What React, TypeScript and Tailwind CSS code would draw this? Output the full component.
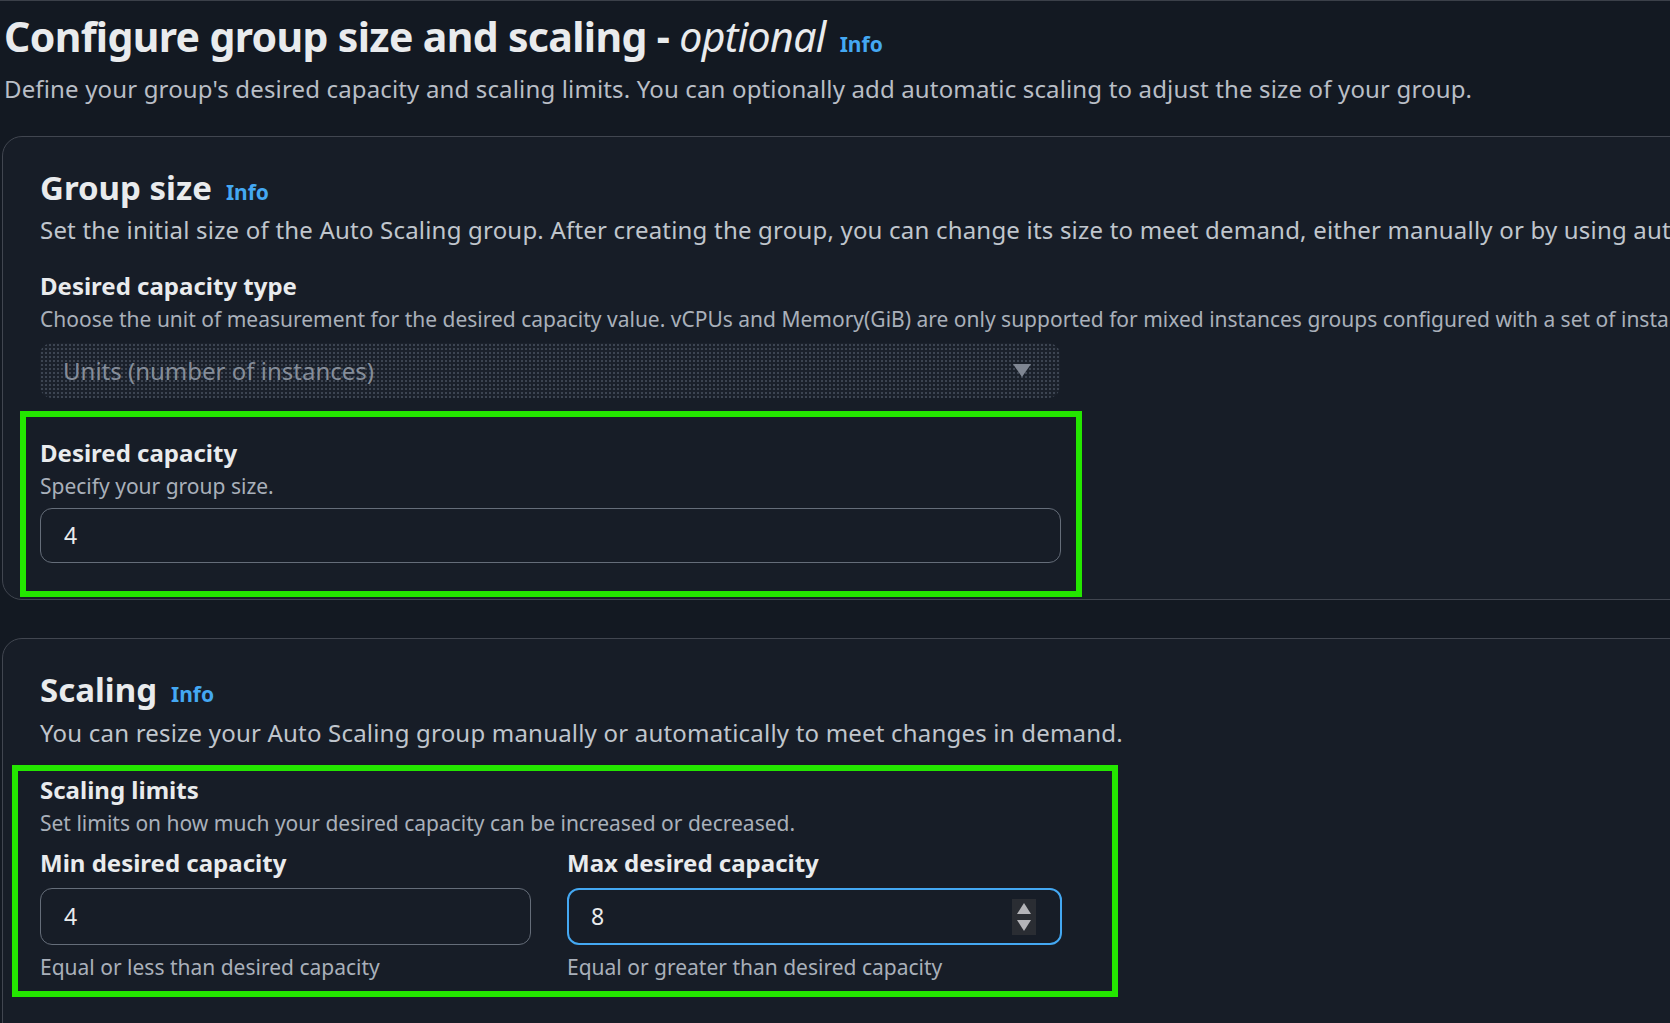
import React from 'react';

const font = { fontFamily: '"Noto Sans", "Open Sans", sans-serif' };

const Info = ({ className = '' }: { className?: string }) => (
  <span className={`font-bold text-[#44a8f2] text-[21px] ${className}`}>Info</span>
);

const Spinner: React.FC = () => (
  <svg width="24" height="36" viewBox="0 0 24 36" className="shrink-0">
    <rect x="0" y="0" width="24" height="36" fill="#2a2d33" />
    <path d="M12 4 L19 15 L5 15 Z" fill="#b4b4b8" />
    <path d="M5 21 L19 21 L12 32 Z" fill="#b4b4b8" />
  </svg>
);

const App: React.FC = () => {
  return (
    <div
      className="w-[1670px] h-[1023px] overflow-hidden bg-[#131922] border-t border-[#3b4049] text-[#e9ebed] whitespace-nowrap"
      style={font}
    >
      {/* Page header */}
      <div className="pl-[4px] pt-[11px]">
        <h1 className="flex items-baseline gap-[14px] text-[41px] leading-[48px] font-bold tracking-[-0.65px]">
          <span>
            Configure group size and scaling - <i className="font-normal">optional</i>
          </span>
          <Info className="tracking-normal" />
        </h1>
        <p className="mt-[6px] text-[24px] leading-[30px] tracking-[0.15px] text-[#b9bec6]">
          Define your group's desired capacity and scaling limits. You can optionally add automatic scaling to adjust the
          size of your group.
        </p>
      </div>

      {/* Group size card */}
      <section className="ml-[2px] mt-[32px] w-[1750px] bg-[#171d27] border border-[#414650] rounded-[20px] pl-[37px] pt-[29px] pb-[2px]">
        <h2 className="flex items-baseline gap-[14px] text-[33px] leading-[44px] font-bold">
          Group size <Info />
        </h2>
        <p className="mt-[1px] text-[24px] leading-[30px] tracking-[0.2px] text-[#c0c6cd]">
          Set the initial size of the Auto Scaling group. After creating the group, you can change its size to meet
          demand, either manually or by using automatic scaling policies.
        </p>

        <div className="mt-[27px] text-[24px] leading-[28px] font-bold">Desired capacity type</div>
        <p className="mt-[6px] text-[21px] leading-[26px] text-[#a9b0ba]">
          Choose the unit of measurement for the desired capacity value. vCPUs and Memory(GiB) are only supported for
          mixed instances groups configured with a set of instance attributes.
        </p>
        <div className="mt-[11px] w-[1020px] h-[55px] rounded-[12px] bg-[#1b212b] bg-[radial-gradient(#3d4552_1px,transparent_1px)] bg-[length:4px_4px] flex items-center justify-between pl-[23px] pr-[28px]">
          <span className="text-[24px] text-[#858d99]">Units (number of instances)</span>
          <svg width="20" height="15" viewBox="0 0 20 15">
            <path d="M1 1 L19 1 L10 14 Z" fill="#7f8692" />
          </svg>
        </div>

        <div className="mt-[13px] -ml-[20px] w-[1062px] border-[6px] border-[#24e600] pl-[14px] pt-[22px] pb-[28px]">
          <div className="text-[24px] leading-[28px] font-bold">Desired capacity</div>
          <p className="mt-[6px] text-[21px] leading-[26px] text-[#a9b0ba]">Specify your group size.</p>
          <div className="mt-[9px] w-[1021px] h-[55px] rounded-[12px] border border-[#656d79] flex items-center pl-[23px] text-[23px]">
            4
          </div>
        </div>
      </section>

      {/* Scaling card */}
      <section className="ml-[2px] mt-[38px] w-[1750px] h-[500px] bg-[#171d27] border border-[#414650] rounded-[20px] pl-[37px] pt-[29px]">
        <h2 className="flex items-baseline gap-[14px] text-[33px] leading-[44px] font-bold">
          Scaling <Info />
        </h2>
        <p className="mt-[2px] text-[24px] leading-[30px] tracking-[0.2px] text-[#c0c6cd]">
          You can resize your Auto Scaling group manually or automatically to meet changes in demand.
        </p>

        <div className="mt-[17px] -ml-[28px] w-[1106px] border-[6px] border-[#24e600] pl-[22px] pt-[5px] pb-[11px]">
          <div className="text-[24px] leading-[28px] font-bold">Scaling limits</div>
          <p className="mt-[6px] text-[21px] leading-[26px] text-[#a9b0ba]">
            Set limits on how much your desired capacity can be increased or decreased.
          </p>
          <div className="mt-[13px] grid grid-cols-[491px_495px] gap-x-[36px]">
            <div>
              <div className="text-[24px] leading-[28px] font-bold">Min desired capacity</div>
              <div className="mt-[11px] h-[57px] rounded-[12px] border border-[#656d79] flex items-center pl-[23px] text-[23px]">
                4
              </div>
              <p className="mt-[9px] text-[21px] leading-[26px] text-[#a9b0ba]">Equal or less than desired capacity</p>
            </div>
            <div>
              <div className="text-[24px] leading-[28px] font-bold">Max desired capacity</div>
              <div className="mt-[11px] h-[57px] rounded-[12px] border-2 border-[#44a8f2] flex items-center justify-between pl-[22px] pr-[24px] text-[23px]">
                8
                <Spinner />
              </div>
              <p className="mt-[9px] text-[21px] leading-[26px] text-[#a9b0ba]">Equal or greater than desired capacity</p>
            </div>
          </div>
        </div>
      </section>
    </div>
  );
};

export default App;
